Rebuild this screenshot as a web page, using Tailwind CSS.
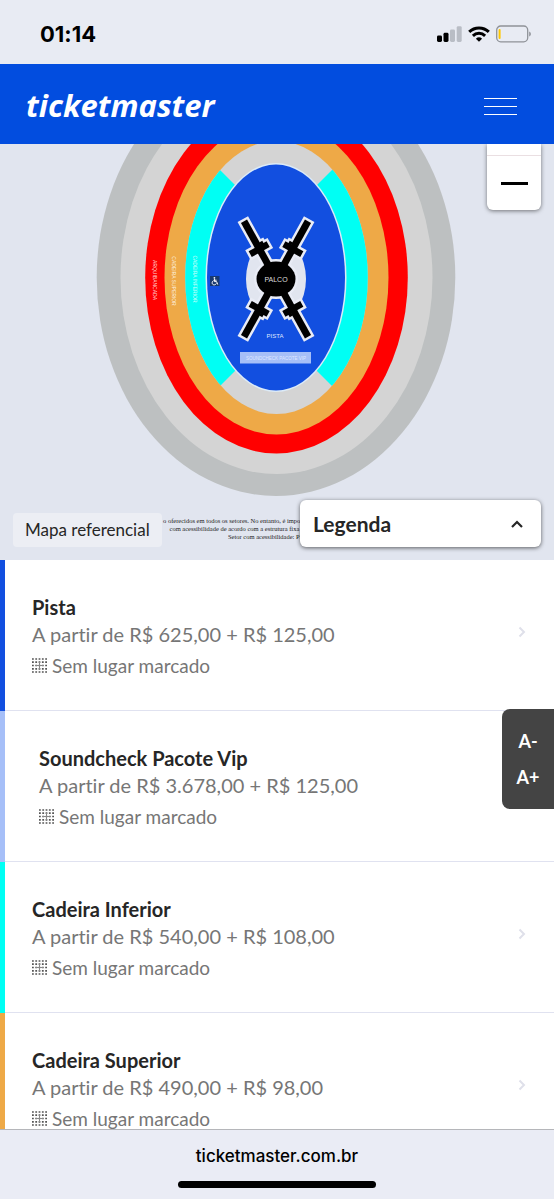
<!DOCTYPE html>
<html lang="pt-BR">
<head>
    <meta charset="UTF-8">
    <meta name="viewport" content="width=device-width, initial-scale=1.0">
    <title>Ticketmaster - Setores</title>
    <script src="https://cdn.jsdelivr.net/npm/@tailwindcss/browser@4"></script>
</head>
<body class="h-screen flex flex-col overflow-hidden bg-white font-['Lato',sans-serif] text-[#262626] [font-variant-ligatures:none]">

    <!-- Barra de status -->
    <div class="h-16 shrink-0 flex items-center justify-between bg-[#e8ebf3] pl-10 pr-[22px] pt-[3px] text-black">
        <span class="font-['Inter',sans-serif] text-[22px] leading-6 font-bold">01:14</span>
        <div class="flex items-center gap-[6px]">
            <svg class="w-[26px] h-4" viewBox="0 0 26 16" aria-hidden="true">
                <rect x="1" y="9.5" width="5" height="6.5" rx="1.4"/>
                <rect x="7.5" y="6.8" width="5" height="9.2" rx="1.4"/>
                <rect x="14" y="3.4" width="5" height="12.6" rx="1.4" fill="#b9bdc5"/>
                <rect x="20.7" y="0.2" width="5" height="15.8" rx="1.4" fill="#b9bdc5"/>
            </svg>
            <svg class="w-[22px] h-4" viewBox="0 0 22 16" fill="none" stroke="#000" stroke-width="3" aria-hidden="true">
                <path d="M1.2 5.9a14 14 0 0 1 19.6 0"/>
                <path d="M4.9 9.8a8.8 8.8 0 0 1 12.2 0"/>
                <path d="M11 15.8l-3.1-3.1a4.5 4.5 0 0 1 6.2 0z" fill="#000" stroke="none"/>
            </svg>
            <svg class="w-9 h-[18px]" viewBox="0 0 36 18" aria-hidden="true">
                <rect x="0.7" y="1" width="31" height="15.8" rx="4" fill="none" stroke="#8f9298" stroke-width="1.3"/>
                <rect x="2.6" y="4" width="2" height="10" rx="1" fill="#ffc800"/>
                <path d="M33.2 6.5c2.2.8 2.2 4.2 0 5z" fill="#8f9298"/>
            </svg>
        </div>
    </div>

    <!-- Cabeçalho -->
    <header class="h-20 shrink-0 flex items-center justify-between bg-[#024ddf] pl-[26px] pr-[37px]">
        <a href="#" class="pt-px font-['Open_Sans',sans-serif] text-[31px] leading-10 font-bold italic text-white">ticketmaster</a>
        <button type="button" aria-label="Menu" class="flex flex-col gap-[7px] pt-1">
            <span class="block w-[33px] h-px bg-white"></span>
            <span class="block w-[33px] h-px bg-white"></span>
            <span class="block w-[33px] h-px bg-white"></span>
        </button>
    </header>

    <!-- Mapa -->
    <section class="relative shrink-0 overflow-hidden bg-[#e1e5ef]">
        <svg class="block w-full" viewBox="0 144 554 416" font-family="Liberation Sans, sans-serif" text-anchor="middle" fill="#fff">
            <defs>
                <clipPath id="laterais">
                    <path d="M180 130L250 200V356L180 426ZM372 130L302 200V356L372 426Z"/>
                </clipPath>
                <clipPath id="arcos">
                    <path d="M276 279L256 245H240V313H256ZM276 279L296 245H312V313H296Z"/>
                </clipPath>
                <g id="braco">
                    <rect x="-3.5" y="-66" width="7" height="59"/>
                    <path d="M-10.5 -37.5H3V-40H6.5V-37.5H10V-31H-10.5Z"/>
                </g>
                <g id="palco">
                    <use href="#braco" transform="rotate(-29)"/>
                    <use href="#braco" transform="scale(-1 1) rotate(-29)"/>
                    <use href="#braco" transform="scale(1 -1) rotate(-29)"/>
                    <use href="#braco" transform="scale(-1 -1) rotate(-29)"/>
                    <ellipse rx="19.5" ry="17.5"/>
                </g>
            </defs>
            <ellipse cx="276" cy="277.5" rx="179.3" ry="218.5" fill="#bdc0c1"/>
            <ellipse cx="276.5" cy="277.5" rx="156" ry="196.5" fill="#d4d4d4"/>
            <ellipse cx="276.5" cy="277.5" rx="131.3" ry="176" fill="#ff0000"/>
            <ellipse cx="276.5" cy="277.5" rx="112" ry="157" fill="#eea947"/>
            <ellipse cx="276.5" cy="277.5" rx="91.3" ry="136.5" fill="#d4d4d4"/>
            <ellipse cx="276.5" cy="277.5" rx="91.3" ry="136.5" fill="#00fff4" clip-path="url(#laterais)"/>
            <ellipse cx="276" cy="277.5" rx="70.5" ry="114.5" fill="#dcebf8"/>
            <ellipse cx="276" cy="277.5" rx="69" ry="113" fill="#124fe0"/>

            <ellipse cx="276" cy="279" rx="30" ry="42" fill="#e1e5ef" clip-path="url(#arcos)"/>
            <g transform="translate(276 279)">
                <use href="#palco" fill="#e9ecf6" stroke="#e9ecf6" stroke-width="5"/>
                <use href="#palco" fill="#000"/>
            </g>
            <text x="276" y="282" font-size="7" fill="#ddd">PALCO</text>
            <text x="275" y="338" font-size="6" fill="#dfe8ff">PISTA</text>
            <rect x="240" y="352" width="71" height="11.5" fill="#a6bff8"/>
            <g transform="translate(276 360) scale(.5)">
                <text font-size="9" fill="#dfe8ff">SOUNDCHECK PACOTE VIP</text>
            </g>
            <g font-size="5" fill-opacity=".85">
                <text transform="translate(153 280) rotate(90)">ARQUIBANCADA</text>
                <text transform="translate(172 281) rotate(90)">CADEIRA SUPERIOR</text>
                <text transform="translate(193 279) rotate(90)">CADEIRA INFERIOR</text>
            </g>
            <!-- Acessibilidade -->
            <g transform="translate(210 276)" fill="none" stroke="#fff" stroke-width="1" stroke-linecap="round" stroke-linejoin="round">
                <rect width="9.5" height="10" fill="#17386f" stroke="none"/>
                <circle cx="4.4" cy="1.8" r=".9" fill="#fff" stroke="none"/>
                <path d="M4.4 3.2V5.6H6.6L7.6 8.2M4.4 4.2H6.2M3.2 4.8A2.2 2.2 0 1 0 6.2 7.8"/>
            </g>
            <g transform="translate(163 523) scale(.5)" font-family="Liberation Serif, serif" font-size="13" fill="#222" text-anchor="start">
                <text x="0" y="0">o oferecidos em todos os setores. No entanto, é importante</text>
                <text x="13" y="16">com acessibilidade de acordo com a estrutura fixa do local</text>
                <text x="130" y="32">Setor com acessibilidade: Pista</text>
            </g>
        </svg>

        <div class="absolute top-0 right-[13px] w-[54px] rounded-b-md bg-white shadow-[0_1px_4px_rgba(0,0,0,0.5)]">
            <div class="h-3 border-b border-[#eadfe2]"></div>
            <button type="button" aria-label="Diminuir zoom" class="flex w-full h-[54px] items-center justify-center">
                <span class="block w-[27px] h-[3px] bg-black"></span>
            </button>
        </div>

        <p class="absolute left-[13px] bottom-[13px] rounded bg-[#eceef4] px-3 py-[5px] text-[17px] leading-6">Mapa referencial</p>

        <button type="button" class="absolute right-[13px] bottom-[13px] flex w-[241px] h-[47px] items-center justify-between rounded-md bg-white pl-[13px] pr-[18px] text-[21px] font-bold shadow-[0_1px_4px_rgba(0,0,0,0.6)]">
            Legenda
            <svg class="w-3 h-2" viewBox="0 0 12 8" fill="none" stroke="#262626" stroke-width="2.2" aria-hidden="true"><path d="M1 7l5-5 5 5"/></svg>
        </button>
    </section>

    <!-- Setores -->
    <main class="relative flex-1 min-h-0">
        <svg class="hidden">
            <symbol id="assentos" viewBox="0 0 15 15">
                <path d="M0 1h15M0 4.2h15M0 7.5h15M0 10.8h15M0 14h15" stroke="#555" stroke-width="1.7" stroke-dasharray="1.8 1.5"/>
                <path d="M7.5 4v7M4 7.5h7" stroke="#888" stroke-width="1"/>
            </symbol>
            <symbol id="seta" viewBox="0 0 8 12">
                <path d="M1.5 1.5L6 6l-4.5 4.5" fill="none" stroke="#dfe0ea" stroke-width="2"/>
            </symbol>
        </svg>
        <ul class="h-full overflow-hidden">
            <li class="border-l-[5px] border-l-[#124fe0]">
                <a href="#" class="flex h-[151px] items-start justify-between border-b border-[#e0e2f0] pt-[34px] pl-[27px] pr-7">
                    <div>
                        <h2 class="text-xl leading-[27px] font-bold">Pista</h2>
                        <p class="text-xl leading-[27px] text-[#767676]">A partir de R$ 625,00 + R$ 125,00</p>
                        <p class="flex items-center gap-[5px] pt-1 text-[19px] leading-[27px] text-[#767676]"><svg class="w-[15px] h-[15px]"><use href="#assentos"/></svg>Sem lugar marcado</p>
                    </div>
                    <svg class="mt-8 w-2 h-3"><use href="#seta"/></svg>
                </a>
            </li>
            <li class="border-l-[5px] border-l-[#a6bff8]">
                <div class="flex h-[151px] items-start border-b border-[#e0e2f0] pt-[34px] pl-[34px] pr-7">
                    <div>
                        <h2 class="text-xl leading-[27px] font-bold">Soundcheck Pacote Vip</h2>
                        <p class="text-xl leading-[27px] text-[#767676]">A partir de R$ 3.678,00 + R$ 125,00</p>
                        <p class="flex items-center gap-[5px] pt-1 text-[19px] leading-[27px] text-[#767676]"><svg class="w-[15px] h-[15px]"><use href="#assentos"/></svg>Sem lugar marcado</p>
                    </div>
                </div>
            </li>
            <li class="border-l-[5px] border-l-[#00fff4]">
                <a href="#" class="flex h-[151px] items-start justify-between border-b border-[#e0e2f0] pt-[34px] pl-[27px] pr-7">
                    <div>
                        <h2 class="text-xl leading-[27px] font-bold">Cadeira Inferior</h2>
                        <p class="text-xl leading-[27px] text-[#767676]">A partir de R$ 540,00 + R$ 108,00</p>
                        <p class="flex items-center gap-[5px] pt-1 text-[19px] leading-[27px] text-[#767676]"><svg class="w-[15px] h-[15px]"><use href="#assentos"/></svg>Sem lugar marcado</p>
                    </div>
                    <svg class="mt-8 w-2 h-3"><use href="#seta"/></svg>
                </a>
            </li>
            <li class="border-l-[5px] border-l-[#eea947]">
                <a href="#" class="flex h-[151px] items-start justify-between border-b border-[#e0e2f0] pt-[34px] pl-[27px] pr-7">
                    <div>
                        <h2 class="text-xl leading-[27px] font-bold">Cadeira Superior</h2>
                        <p class="text-xl leading-[27px] text-[#767676]">A partir de R$ 490,00 + R$ 98,00</p>
                        <p class="flex items-center gap-[5px] pt-1 text-[19px] leading-[27px] text-[#767676]"><svg class="w-[15px] h-[15px]"><use href="#assentos"/></svg>Sem lugar marcado</p>
                    </div>
                    <svg class="mt-8 w-2 h-3"><use href="#seta"/></svg>
                </a>
            </li>
        </ul>

        <!-- Tamanho do texto -->
        <div class="absolute right-0 top-[149px] flex w-[52px] flex-col rounded-l-lg bg-[#444] py-[14px] text-lg font-bold text-white">
            <button type="button" class="h-9">A-</button>
            <button type="button" class="h-9">A+</button>
        </div>
    </main>

    <!-- Barra do navegador -->
    <footer class="h-[70px] shrink-0 flex flex-col items-center justify-between border-t border-[#b5b6ba] bg-[#eaecf5] pt-[14px] pb-[11px] text-black">
        <span class="font-['Inter',sans-serif] text-[17px] leading-6 font-medium">ticketmaster.com.br</span>
        <div class="w-[198px] h-[7px] rounded-full bg-black"></div>
    </footer>
</body>
</html>
